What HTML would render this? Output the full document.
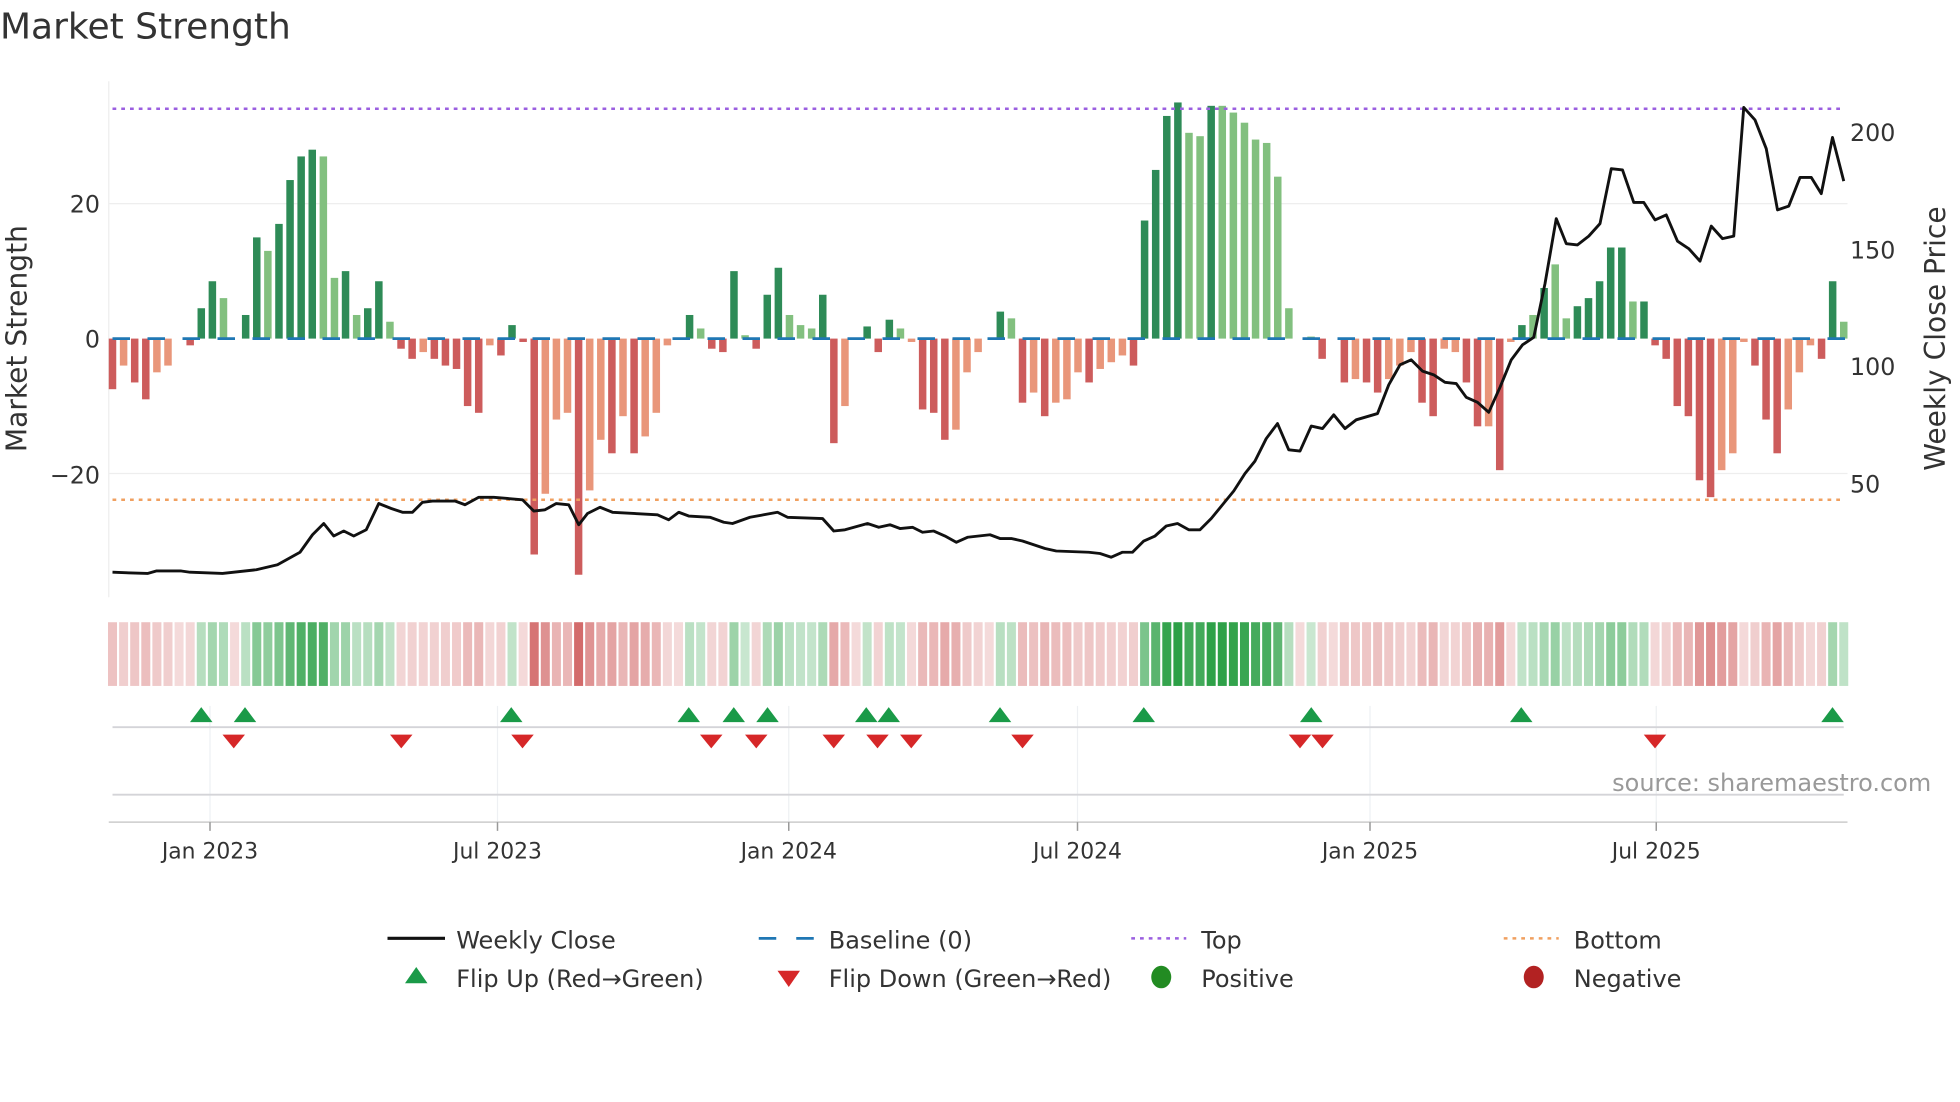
<!DOCTYPE html>
<html><head><meta charset="utf-8">
<style>
html,body{margin:0;padding:0;background:#fff;}
svg{display:block;}
text{font-family:"DejaVu Sans","Liberation Sans",sans-serif;fill:#333;}
</style></head>
<body>
<svg id="s" width="1960" height="1102" viewBox="0 0 1568 882" preserveAspectRatio="none" xmlns="http://www.w3.org/2000/svg">
<text x="0" y="31" font-size="28.8">Market Strength</text>
<line x1="87" y1="65" x2="87" y2="478" stroke="#eee" stroke-width="1"/>
<line x1="87" y1="163" x2="1478" y2="163" stroke="#eee" stroke-width="1"/>
<line x1="87" y1="379" x2="1478" y2="379" stroke="#eee" stroke-width="1"/>
<g id="bars"></g>
<line x1="90" y1="271" x2="1476" y2="271" stroke="#1f77b4" stroke-width="2.2" stroke-dasharray="14 14"/>
<line x1="90" y1="87" x2="1476" y2="87" stroke="#9b5fe0" stroke-width="2" stroke-dasharray="3 4"/>
<line x1="90" y1="400" x2="1476" y2="400" stroke="#f0a060" stroke-width="2" stroke-dasharray="3 4"/>
<polyline fill="none" stroke="#111" stroke-width="2.3" stroke-linejoin="round" points="90,458 118,459 125,457 145,457 152,458 178,459 205,456 222,452 240,442 250,428 259,419 267,429 275,425 283,429 293,424 303,403 313,407 322,410 330,410 338,402 346,401 364,401 372,404 383,398 395,398 418,400 427,409 436,408 445,403 455,404 463,420 470,411 480,406 490,410 526,412 535,416 543,410 551,413 568,414 579,418 586,419 600,414 622,410 630,414 658,415 667,425 676,424 694,419 703,422 712,420 720,423 730,422 738,426 747,425 756,429 765,434 774,430 792,428 800,431 809,431 818,433 836,439 845,441 871,442 880,443 889,446 898,442 906,442 915,433 924,429 933,421 942,419 951,424 960,424 969,415 978,404 987,393 996,379 1004,369 1013,351 1022,339 1031,360 1040,361 1049,341 1058,343 1067,332 1076,343 1085,336 1102,331 1111,308 1120,292 1129,288 1138,297 1147,300 1156,306 1165,307 1173,318 1182,322 1191,330 1200,310 1209,288 1218,276 1227,270 1236,227 1245,175 1253,195 1262,196 1271,189 1280,179 1289,135 1298,136 1307,162 1315,162 1324,176 1333,172 1342,193 1351,199 1360,209 1369,181 1378,191 1387,189 1395,86 1404,96 1413,119 1422,168 1431,165 1440,142 1449,142 1457,155 1466,110 1475,145"/>
<g font-size="19">
<text x="80" y="170" text-anchor="end">20</text>
<text x="80" y="278" text-anchor="end">0</text>
<text x="80" y="387" text-anchor="end">−20</text>
<text x="1480" y="113">200</text>
<text x="1480" y="207">150</text>
<text x="1480" y="300">100</text>
<text x="1480" y="394">50</text>
</g>
<text font-size="22.5" text-anchor="middle" transform="translate(21,271) rotate(-90)">Market Strength</text>
<text font-size="22.5" text-anchor="middle" transform="translate(1556,271) rotate(-90)">Weekly Close Price</text>
<g id="strip"></g>
<g stroke="#eef0f3" stroke-width="1">
<line x1="168" y1="565" x2="168" y2="658"/><line x1="398" y1="565" x2="398" y2="658"/><line x1="631" y1="565" x2="631" y2="658"/><line x1="862" y1="565" x2="862" y2="658"/><line x1="1096" y1="565" x2="1096" y2="658"/><line x1="1325" y1="565" x2="1325" y2="658"/>
</g>
<line x1="90" y1="582" x2="1475" y2="582" stroke="#d4d4d8" stroke-width="1.5"/>
<line x1="90" y1="636" x2="1475" y2="636" stroke="#d4d4d8" stroke-width="1.5"/>
<line x1="87" y1="658" x2="1478" y2="658" stroke="#ccc" stroke-width="1.2"/>
<g stroke="#999" stroke-width="1.2">
<line x1="168" y1="658" x2="168" y2="665"/><line x1="398" y1="658" x2="398" y2="665"/><line x1="631" y1="658" x2="631" y2="665"/><line x1="862" y1="658" x2="862" y2="665"/><line x1="1096" y1="658" x2="1096" y2="665"/><line x1="1325" y1="658" x2="1325" y2="665"/>
</g>
<g id="marks"></g>
<text x="1545" y="633" font-size="19.2" text-anchor="end" style="fill:#999">source: sharemaestro.com</text>
<g font-size="17.5" text-anchor="middle">
<text x="168" y="687">Jan 2023</text><text x="398" y="687">Jul 2023</text><text x="631" y="687">Jan 2024</text><text x="862" y="687">Jul 2024</text><text x="1096" y="687">Jan 2025</text><text x="1325" y="687">Jul 2025</text>
</g>
<line x1="310" y1="751" x2="356" y2="751" stroke="#111" stroke-width="2.5"/>
<line x1="607" y1="751" x2="651" y2="751" stroke="#1f77b4" stroke-width="2.2" stroke-dasharray="14 16"/>
<line x1="905" y1="751" x2="949" y2="751" stroke="#9b5fe0" stroke-width="2" stroke-dasharray="3 4"/>
<line x1="1203" y1="751" x2="1247" y2="751" stroke="#f0a060" stroke-width="2" stroke-dasharray="3 4"/>
<polygon points="324,787 342,787 333,774" fill="#1a9a48"/>
<polygon points="622,777 640,777 631,790" fill="#d62728"/>
<ellipse cx="929" cy="782" rx="8" ry="9" fill="#228b22"/>
<ellipse cx="1227" cy="782" rx="8" ry="9" fill="#b22222"/>
<g font-size="19.2">
<text x="365" y="759">Weekly Close</text><text x="663" y="759">Baseline (0)</text><text x="961" y="759">Top</text><text x="1259" y="759">Bottom</text>
<text x="365" y="790">Flip Up (Red→Green)</text><text x="663" y="790">Flip Down (Green→Red)</text><text x="961" y="790">Positive</text><text x="1259" y="790">Negative</text>
</g>
</svg>
<script>
var D=[[-7.5,0],[-4,1],[-6.5,0],[-9,0],[-5,1],[-4,1],[0,0],[-1,0],[4.5,0],[8.5,0],
[6,1],[0,0],[3.5,0],[15,0],[13,1],[17,0],[23.5,0],[27,0],[28,0],[27,1],
[9,1],[10,0],[3.5,1],[4.5,0],[8.5,0],[2.5,1],[-1.5,0],[-3,0],[-2,1],[-3,0],
[-4,0],[-4.5,0],[-10,0],[-11,0],[-1,1],[-2.5,0],[2,0],[-0.5,0],[-32,0],[-23,1],
[-12,1],[-11,1],[-35,0],[-22.5,1],[-15,1],[-17,0],[-11.5,1],[-17,0],[-14.5,1],[-11,1],
[-1,1],[0,0],[3.5,0],[1.5,1],[-1.5,0],[-2,0],[10,0],[0.5,1],[-1.5,0],[6.5,0],
[10.5,0],[3.5,1],[2,1],[1.5,1],[6.5,0],[-15.5,0],[-10,1],[0,0],[1.8,0],[-2,0],
[2.8,0],[1.5,1],[-0.5,1],[-10.5,0],[-11,0],[-15,0],[-13.5,1],[-5,1],[-2,1],[0,0],
[4,0],[3,1],[-9.5,0],[-8,1],[-11.5,0],[-9.5,1],[-9,1],[-5,1],[-6.5,0],[-4.5,1],
[-3.5,1],[-2.5,1],[-4,0],[17.5,0],[25,0],[33,0],[35,0],[30.5,1],[30,1],[34.5,0],
[34.5,1],[33.5,1],[32,1],[29.5,1],[29,1],[24,1],[4.5,1],[0,0],[0.3,1],[-3,0],
[0,0],[-6.5,0],[-6,1],[-6.5,0],[-8,0],[-6,1],[-4,1],[-2,1],[-9.5,0],[-11.5,0],
[-1.5,1],[-2,1],[-6.5,0],[-13,0],[-13,1],[-19.5,0],[-0.5,1],[2,0],[3.5,1],[7.5,0],
[11,1],[3,1],[4.8,0],[6,0],[8.5,0],[13.5,0],[13.5,0],[5.5,1],[5.5,0],[-1,0],
[-3,0],[-10,0],[-11.5,0],[-21,0],[-23.5,0],[-19.5,1],[-17,1],[-0.5,1],[-4,0],[-12,0],
[-17,0],[-10.5,1],[-5,1],[-1,1],[-3,0],[8.5,0],[2.5,1]];
var ns="http://www.w3.org/2000/svg",b=document.getElementById("bars"),st=document.getElementById("strip"),mk=document.getElementById("marks");
function el(t,a,p){var e=document.createElementNS(ns,t);for(var k in a)e.setAttribute(k,a[k]);p.appendChild(e);}
var step=1385/(D.length-1);
for(var i=0;i<D.length;i++){var v=D[i][0],x=90+i*step,l=D[i][1]==1;
 if(v!=0){var c=v>0?(l?"#82c07f":"#2e8b57"):(l?"#e9967a":"#cd5c5c");var h=Math.abs(v)*5.4;
 el("rect",{x:x-3,y:v>0?271-h:271,width:6,height:h,fill:c},b);}
 var a=Math.abs(v)/35, col=v>0?"rgba(44,160,70,"+(0.25+0.75*a)+")":"rgba(200,70,70,"+(0.2+0.6*a)+")";
 el("rect",{x:x-3.6,y:498,width:7.2,height:51,fill:col},st);}
var up=[161,196,409,551,587,614,693,711,800,915,1049,1217,1466],dn=[187,321,418,569,605,667,702,729,818,1040,1058,1324];
up.forEach(function(x){el("polygon",{points:(x-9)+",578 "+(x+9)+",578 "+x+",566",fill:"#1a9a48"},mk);});
dn.forEach(function(x){el("polygon",{points:(x-9)+",588 "+(x+9)+",588 "+x+",599",fill:"#d62728"},mk);});
</script>
</body></html>
